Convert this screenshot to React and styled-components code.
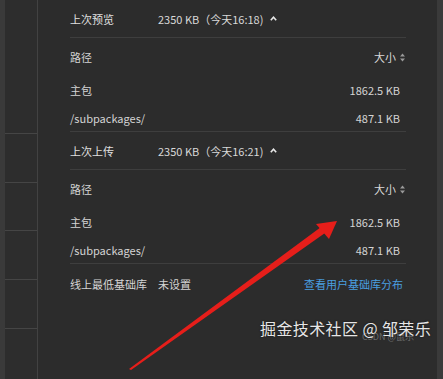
import styled, { createGlobalStyle } from "styled-components";

const GlobalStyle = createGlobalStyle`
  html, body {
    margin: 0;
    padding: 0;
    background: #2c2c2c;
  }
`;

const Screen = styled.div`
  position: relative;
  width: 443px;
  height: 379px;
  overflow: hidden;
  display: flex;
  background: #3a3a3a;
  font-family: "Noto Sans CJK SC", "Liberation Sans", sans-serif;
  font-size: 11px;
  color: #d4d4d4;
`;

const Sidebar = styled.div`
  margin-left: 5px;
  width: 32px;
  flex-shrink: 0;
  background: #2d2d2d;
  border-right: 1px solid #424242;
  display: flex;
  flex-direction: column;
`;

const SideCell = styled.div`
  height: ${(p) => p.h}px;
  flex-shrink: 0;
  border-bottom: 1px solid #454545;
  box-sizing: border-box;
`;

const Main = styled.div`
  flex: 1;
  background: #2c2c2c;
  padding: 0 31px 0 32px;
  margin-right: 6px;
  display: flex;
  flex-direction: column;
`;

const SectionHead = styled.div`
  height: 38px;
  display: flex;
  align-items: center;
  border-bottom: 1px solid #3e3e3e;
  box-sizing: border-box;
  color: #e0e0e0;
`;

const HeadLabel = styled.span`
  width: 88px;
  flex-shrink: 0;
`;

const HeadValue = styled.span`
  color: #d8d8d8;
  display: flex;
  align-items: center;
  gap: 7px;
`;

const Caret = styled.svg`
  width: 7px;
  height: 5px;
`;

const Row = styled.div`
  height: ${(p) => p.h}px;
  display: flex;
  align-items: center;
  justify-content: space-between;
  padding-right: ${(p) => p.pr ?? 6}px;
  box-sizing: border-box;
  border-bottom: ${(p) => (p.line ? "1px solid #3e3e3e" : "none")};
`;

const SortLabel = styled.span`
  display: flex;
  align-items: center;
  gap: 4px;
  color: #d8d8d8;
`;

const Footer = styled.div`
  height: 40px;
  display: flex;
  align-items: center;
  padding-right: 3px;
`;

const Link = styled.span`
  margin-left: auto;
  color: #4a9fe0;
`;

const Watermark = styled.div`
  position: absolute;
  left: 260px;
  top: 316px;
  font-size: 16px;
  color: #e6e6e6;
  letter-spacing: 0.4px;
  text-shadow: 0 0 2px rgba(0, 0, 0, 0.6);
  white-space: nowrap;
`;

const SubMark = styled.span`
  position: absolute;
  left: 102px;
  top: 14px;
  font-size: 9px;
  color: rgba(200, 200, 200, 0.4);
  letter-spacing: 0;
  text-shadow: none;
`;

const Arrow = styled.svg`
  position: absolute;
  left: 0;
  top: 0;
  pointer-events: none;
`;

function UpCaret() {
  return (
    <Caret viewBox="0 0 7 5">
      <path d="M0.8 4.2 L3.5 1.2 L6.2 4.2" fill="none" stroke="#e8e8e8" strokeWidth="1.6" />
    </Caret>
  );
}

function SortIcon() {
  return (
    <svg width="5" height="9" viewBox="0 0 5 9">
      <path d="M0 3.5 L2.5 0.5 L5 3.5 Z" fill="#9a9a9a" />
      <path d="M0 5.5 L2.5 8.5 L5 5.5 Z" fill="#9a9a9a" />
    </svg>
  );
}

function PackSection({ title, value }) {
  return (
    <>
      <SectionHead>
        <HeadLabel>{title}</HeadLabel>
        <HeadValue>
          {value}
          <UpCaret />
        </HeadValue>
      </SectionHead>
      <Row h={38} pr={1}>
        <span>路径</span>
        <SortLabel>
          大小 <SortIcon />
        </SortLabel>
      </Row>
      <Row h={28}>
        <span>主包</span>
        <span>1862.5 KB</span>
      </Row>
      <Row h={28} line>
        <span>/subpackages/</span>
        <span>487.1 KB</span>
      </Row>
    </>
  );
}

export default function App() {
  return (
    <>
      <GlobalStyle />
      <Screen>
        <Sidebar>
          <SideCell h={134} />
          <SideCell h={49} />
          <SideCell h={48} />
          <SideCell h={49} />
          <SideCell h={49} />
        </Sidebar>
        <Main>
          <PackSection title="上次预览" value="2350 KB（今天16:18)" />
          <PackSection title="上次上传" value="2350 KB（今天16:21)" />
          <Footer>
            <HeadLabel>线上最低基础库</HeadLabel>
            <span>未设置</span>
            <Link>查看用户基础库分布</Link>
          </Footer>
        </Main>
        <Watermark>
          掘金技术社区 @ 邹荣乐
          <SubMark>CSDN @鼠乐</SubMark>
        </Watermark>
        <Arrow width="443" height="379" viewBox="0 0 443 379">
          <polygon points="129,369 131,370 325,233 321,227" fill="#e61e1a" />
          <polygon points="337,221 316,224 329,239" fill="#e61e1a" />
        </Arrow>
      </Screen>
    </>
  );
}
